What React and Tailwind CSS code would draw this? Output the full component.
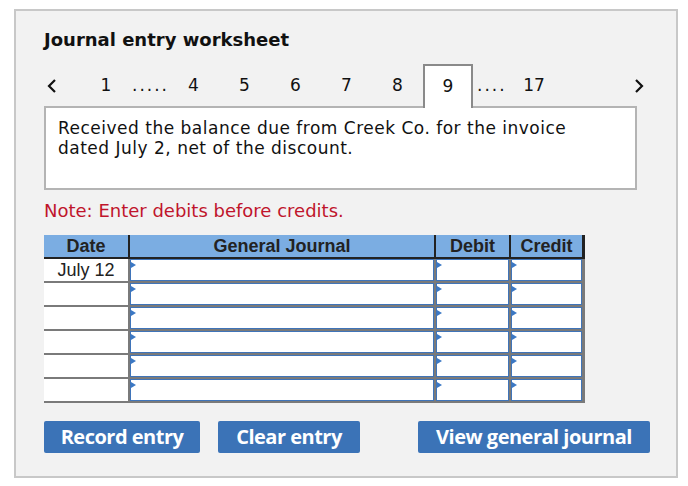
import React from "react";

// nav items between the arrows
const pages = ["4", "5", "6", "7", "8"];

function Chevron({ dir }) {
    return (
        <svg width="10" height="16" viewBox="0 0 10 16" className="block">
            <polyline
                points={dir === "left" ? "8,2 2,8 8,14" : "2,2 8,8 2,14"}
                fill="none"
                stroke="#111"
                strokeWidth="2.2"
            />
        </svg>
    );
}

function InputCell({ className }) {
    return (
        <div className={"relative h-full border border-[#3f74b9] bg-white " + className}>
            <span className="absolute left-0 top-[2px] h-0 w-0 border-y-[3px] border-l-[5px] border-y-transparent border-l-[#3b78c4]" />
        </div>
    );
}

function Row({ date }) {
    return (
        <div className="flex h-[24px] border-b-2 border-[#7a7a7a]">
            <div className="flex w-[84px] items-center justify-center bg-white text-[18px] leading-none text-[#222]">
                {date}
            </div>
            <div className="w-[2px] bg-[#7a7a7a]" />
            <InputCell className="w-[304px]" />
            <div className="w-[2px] bg-[#7a7a7a]" />
            <InputCell className="w-[73px]" />
            <div className="w-[2px] bg-[#7a7a7a]" />
            <InputCell className="w-[71px]" />
        </div>
    );
}

export default function App() {
    return (
        <div className="h-[486px] w-[688px] bg-white pl-[14px] pt-[9px]">
            <div className="h-[469px] w-[664px] border-2 border-[#c8c8c8] bg-[#f2f2f2] pl-[28px] pt-[20px] font-['DejaVu_Sans',sans-serif] text-[#111]">
                {/* heading */}
                <h1 className="text-[18px] font-bold leading-[18px]">Journal entry worksheet</h1>

                {/* step navigation */}
                <div className="relative z-10 mt-[15px] flex h-[44px] items-center text-[17px]">
                    <div className="w-[47px] pl-[3px]">
                        <Chevron dir="left" />
                    </div>
                    <div className="w-[30px] text-center">1</div>
                    <div className="w-[47px] pl-[11px] tracking-[2px]">.....</div>
                    {pages.map((p) => (
                        <div key={p} className="w-[51px] text-center">
                            {p}
                        </div>
                    ))}
                    <div className="flex h-full w-[50px] items-center justify-center self-stretch border-2 border-b-0 border-[#8a8a8a] bg-white">
                        9
                    </div>
                    <div className="w-[40px] pl-[4px] tracking-[2px]">....</div>
                    <div className="w-[42px] text-center">17</div>
                    <div className="flex flex-1 justify-end pr-[32px]">
                        <Chevron dir="right" />
                    </div>
                </div>

                {/* question text */}
                <div className="-mt-[2px] h-[84px] w-[593px] border-2 border-[#b4b4b4] bg-white pl-[12px] pt-[10px] text-[17px] leading-[20px] tracking-[0.5px]">
                    Received the balance due from Creek Co. for the invoice
                    <br />
                    dated July 2, net of the discount.
                </div>

                <p className="mt-[12px] text-[18px] leading-[18px] text-[#c0152c]">Note: Enter debits before credits.</p>

                {/* journal table */}
                <div className="mt-[15px] w-[541px] border-r-[3px] border-[#7a7a7a] font-['Liberation_Sans',Arial,sans-serif]">
                    <div className="-mr-[3px] flex h-[24px] border-b-2 border-r-[3px] border-[#222] bg-[#7badE2] text-[18px] font-bold leading-none text-[#222]">
                        <div className="flex w-[84px] items-center justify-center">Date</div>
                        <div className="w-[2px] bg-[#222]" />
                        <div className="flex w-[304px] items-center justify-center">General Journal</div>
                        <div className="w-[2px] bg-[#222]" />
                        <div className="flex w-[73px] items-center justify-center">Debit</div>
                        <div className="w-[2px] bg-[#222]" />
                        <div className="flex w-[71px] items-center justify-center">Credit</div>
                    </div>
                    <Row date="July 12" />
                    <Row />
                    <Row />
                    <Row />
                    <Row />
                    <Row />
                </div>

                {/* actions */}
                <div className="mt-[18px] flex h-[32px] font-['Open_Sans',sans-serif] text-[20px] font-bold tracking-[-0.5px] text-white">
                    <button className="w-[156px] rounded-[2px] bg-[#3b73b7]">Record entry</button>
                    <button className="ml-[18px] w-[142px] rounded-[2px] bg-[#3b73b7]">Clear entry</button>
                    <button className="ml-[58px] w-[232px] rounded-[2px] bg-[#3b73b7]">View general journal</button>
                </div>
            </div>
        </div>
    );
}
